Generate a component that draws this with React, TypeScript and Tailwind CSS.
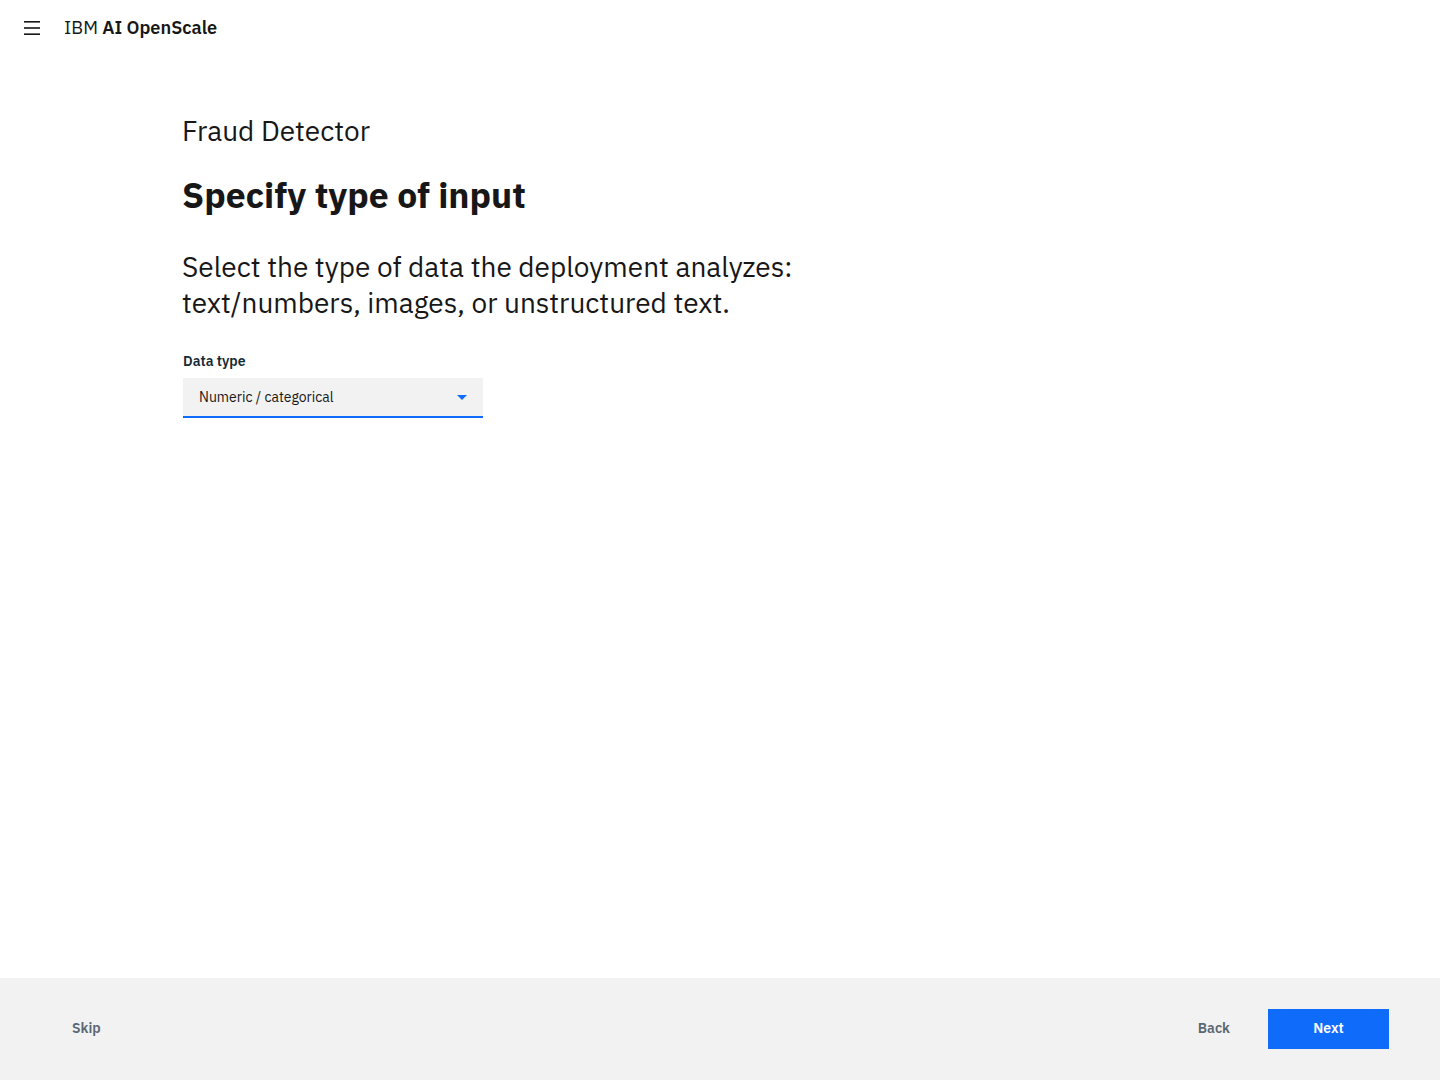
import React from "react";

export default function App() {
  const font = { fontFamily: '"IBM Plex Sans", Roboto, "Noto Sans", sans-serif' };
  return (
    <div className="w-[1440px] h-[1080px] bg-white flex flex-col text-[#171717]" style={font}>
      <header className="h-[55px] flex items-center shrink-0">
        <button className="w-[64px] h-full flex items-center justify-center" aria-label="menu">
          <svg width="16" height="14" viewBox="0 0 16 14">
            <rect x="0" y="0" width="16" height="1.6" fill="#171717" />
            <rect x="0" y="6.2" width="16" height="1.6" fill="#171717" />
            <rect x="0" y="12.4" width="16" height="1.6" fill="#171717" />
          </svg>
        </button>
        <div className="text-[18.2px] leading-none text-[#171717]">
          IBM <span className="font-semibold">AI OpenScale</span>
        </div>
      </header>

      <main className="flex-1 pl-[182px] pt-[58px]">
        <div className="text-[28px] leading-[36px] font-normal text-[#171717]">Fraud Detector</div>
        <h1 className="mt-[26px] text-[35.5px] leading-[40px] font-bold text-[#171717]">Specify type of input</h1>
        <p className="mt-[34px] text-[28px] leading-[36px] font-normal text-[#171717] w-[660px]">
          Select the type of data the deployment analyzes: text/numbers, images, or unstructured text.
        </p>
        <div className="mt-[31px]">
          <label className="block text-[14px] leading-[18px] font-semibold text-[#152935] pl-[1px]">Data type</label>
          <div className="mt-[8px] w-[300px] h-[40px] ml-[1px] bg-[#f2f2f2] border-b-2 border-[#0f6cfb] flex items-center justify-between pl-[16px] pr-[16px]">
            <span className="text-[14px] text-[#171717]">Numeric / categorical</span>
            <svg width="10" height="5" viewBox="0 0 10 5">
              <path d="M0 0 L10 0 L5 5 Z" fill="#0f6cfb" />
            </svg>
          </div>
        </div>
      </main>

      <footer className="h-[102px] bg-[#f2f2f2] flex items-center justify-between shrink-0">
        <button className="ml-[56px] px-[16px] h-[40px] pb-[2px] text-[14px] font-semibold text-[#5a6872]">Skip</button>
        <div className="flex items-center mr-[51px]">
          <button className="px-[16px] h-[40px] pb-[2px] text-[14px] font-semibold text-[#5a6872] mr-[22px]">Back</button>
          <button className="w-[121px] h-[40px] pb-[2px] bg-[#0f6cfb] text-white text-[14px] font-semibold">Next</button>
        </div>
      </footer>
    </div>
  );
}
